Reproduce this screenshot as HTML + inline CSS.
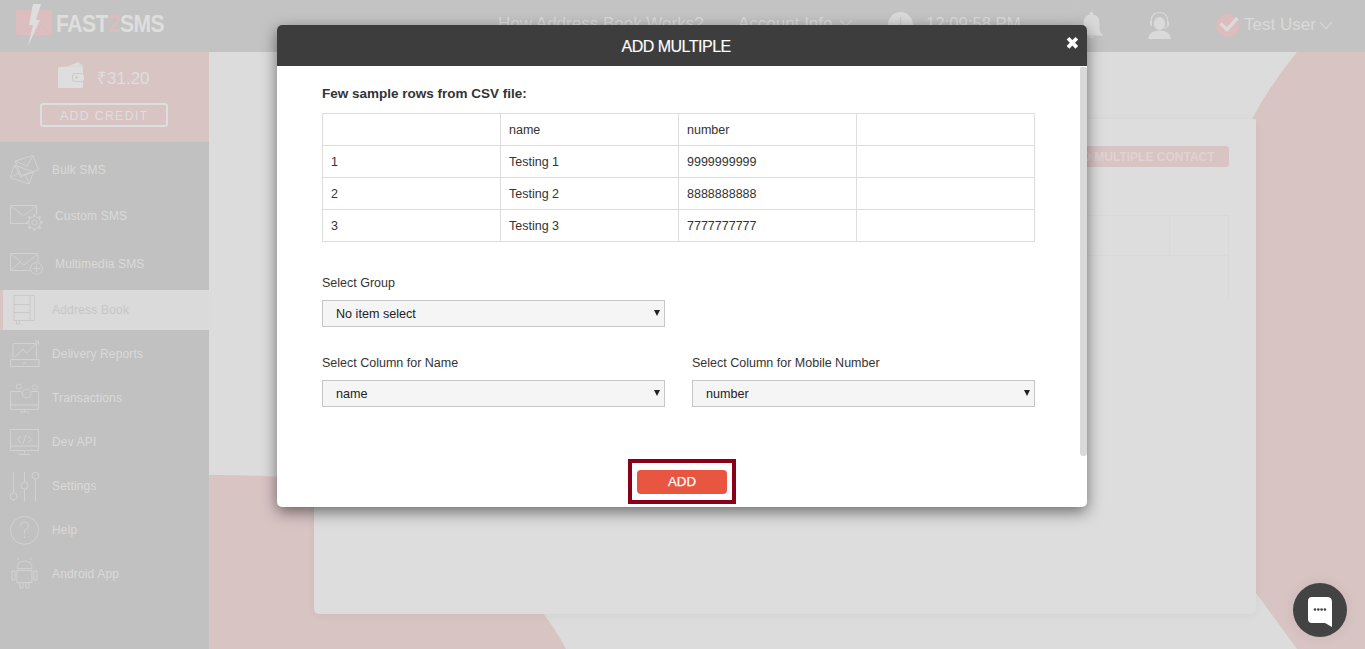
<!DOCTYPE html>
<html><head><meta charset="utf-8">
<style>
*{box-sizing:border-box;margin:0;padding:0}
html,body{width:1365px;height:649px;overflow:hidden}
body{position:relative;background:#dcdcdc;font-family:"Liberation Sans",sans-serif}
.abs{position:absolute}
#hdr{left:0;top:0;width:1365px;height:52px;background:#c3c3c3}
#side{left:0;top:52px;width:209px;height:597px;background:#c1c1c1}
#wallet{left:0;top:52px;width:209px;height:90px;background:#d9c4c4}
.mt{position:absolute;font-size:12px;color:#dadada;letter-spacing:0.15px;white-space:nowrap}
.hd{position:absolute;color:#dadada;font-size:17px;white-space:nowrap}
#card{left:314px;top:119px;width:942px;height:495px;background:#dddddd;border-radius:5px;box-shadow:0 2px 10px rgba(0,0,0,0.045)}
#modal{left:277px;top:25px;width:810px;height:482px;background:#fff;border-radius:5px;box-shadow:0 5px 15px rgba(0,0,0,0.5);overflow:hidden}
#mh{left:0;top:0;width:810px;height:41px;background:#3d3d3d}
.lbl{position:absolute;font-size:12.5px;color:#333;white-space:nowrap}
.sel{position:absolute;height:27px;background:#f5f5f5;border:1px solid #c6c6c6}
.sel span{position:absolute;left:13px;top:6px;font-size:12.6px;color:#222;white-space:nowrap}
.sel i{position:absolute;right:4.5px;top:9px;width:0;height:0;border-left:3.3px solid transparent;border-right:3.3px solid transparent;border-top:6px solid #222}
table{position:absolute;left:45px;top:88px;border-collapse:collapse}
td{border:1px solid #dddddd;width:178px;height:32px;font-size:12.5px;color:#333;padding:0 0 0 8px;vertical-align:middle}
svg{position:absolute;overflow:visible}
</style></head><body>
<!-- background pink shapes -->
<svg style="left:0;top:0" width="1365" height="649">
  <path d="M209 475 Q300 474 380 490 Q520 560 566 649 L209 649 Z" fill="#d9c4c4"/>
  <path d="M1297 52 L1365 52 L1365 649 L1297 649 L1256 593 L1256 119 L1252 119 Q1270 85 1297 52 Z" fill="#d9c4c4"/>
</svg>
<div id="card" class="abs"></div>
<div class="abs" style="left:1000px;top:146px;width:229px;height:21px;background:#d9c4c4;border-radius:3px"></div>
<div class="abs" style="left:1065px;top:150px;font-size:12px;font-weight:bold;color:#e0d2d2;white-space:nowrap">ADD MULTIPLE CONTACT</div>
<!-- faint table in card -->
<div class="abs" style="left:900px;top:215px;width:329px;height:84px;border:1px solid #d9d9d9;border-bottom:none"></div>
<div class="abs" style="left:900px;top:255px;width:329px;height:1px;background:#d9d9d9"></div>
<div class="abs" style="left:1169px;top:215px;width:1px;height:41px;background:#d9d9d9"></div>

<div id="hdr" class="abs"></div>
<div id="side" class="abs"></div>
<div id="wallet" class="abs"></div>
<div class="abs" style="left:0;top:290px;width:209px;height:40px;background:#dadada"></div>
<div class="abs" style="left:0;top:290px;width:3px;height:40px;background:#d9c4c4"></div>

<!-- logo -->
<div class="abs" style="left:16px;top:10px;width:36px;height:25px;background:#dcbebe;border-radius:2px"></div>
<svg style="left:16px;top:10px" width="36" height="25"><path d="M1 24 L13 13 M35 24 L23 13" stroke="#d8baba" stroke-width="0.7" fill="none"/></svg>
<svg style="left:24px;top:3px" width="20" height="44"><path d="M9 1 L17 1 L12 17 L16 17 L4 43 L9 22 L5 22 Z" fill="#dedede"/></svg>
<div class="abs" style="left:56px;top:10px;line-height:28px;font-size:24.5px;font-weight:bold;color:#dedede;letter-spacing:-0.6px;white-space:nowrap;transform:scaleX(0.86);transform-origin:0 0">FAST<span style="color:#dcbcbc;font-size:26.5px;line-height:0;-webkit-text-stroke:0px">2</span>SMS</div>

<!-- wallet -->
<svg style="left:57px;top:61px" width="30" height="28">
  <path d="M9 6 L22 1 L24 5 Z" fill="#dedede"/>
  <path d="M13 6 L25 3 L26 6 Z" fill="#d8d8d8"/>
  <rect x="1" y="6" width="25" height="21" rx="1.5" fill="#dedede"/>
  <rect x="15" y="12" width="12" height="9" rx="3" fill="#d4c8c8"/>
  <rect x="16" y="13" width="11" height="7" rx="2.5" fill="#dedede"/>
  <circle cx="19.5" cy="16.5" r="0.9" fill="#c9b8b8"/>
</svg>
<div class="abs" style="left:97px;top:66px;font-size:17px;color:#dedede;white-space:nowrap">₹31.20</div>
<div class="abs" style="left:40px;top:103px;width:128px;height:24px;border:2px solid #dedede;border-radius:3px"></div>
<div class="abs" style="left:60px;top:109px;font-size:12.5px;color:#dedede;letter-spacing:1.2px;white-space:nowrap">ADD CREDIT</div>

<!-- menu icons -->
<svg style="left:0;top:0" width="209" height="649" fill="none" stroke="#d2d2d2" stroke-width="1">
  <!-- bulk sms -->
  <path d="M15 161 L33 155.5 L38.5 170 L21 175.5 Z M15 161 L27 166 L33 155.5"/>
  <path d="M14.5 165 L33.5 172 L29 184 L10 177.5 Z M14.5 165 L20.5 177 L33.5 172 M10 177.5 L19 173 M29 184 L26 176"/>
  <!-- custom sms -->
  <path d="M27 223.5 L10.5 223.5 L10.5 205.5 L36.5 205.5 L36.5 214 M10.5 205.5 L23.5 216 L36.5 205.5"/>
  <circle cx="34.5" cy="222.5" r="6"/><circle cx="34.5" cy="222.5" r="2.6"/>
  <path d="M34.5 214 L34.5 216.5 M34.5 228.5 L34.5 231 M26 222.5 L28.5 222.5 M40.5 222.5 L43 222.5 M28.5 216.5 L30.3 218.3 M38.7 226.7 L40.5 228.5 M40.5 216.5 L38.7 218.3 M30.3 226.7 L28.5 228.5" stroke-width="2"/>
  <!-- multimedia -->
  <path d="M30.5 270.5 L10.5 270.5 L10.5 253.5 L38 253.5 L38 262 M10.5 253.5 L24 265 L38 253.5 M10.5 270.5 L20 262"/>
  <circle cx="36.5" cy="268.5" r="6"/><path d="M36.5 264.5 L36.5 272.5 M32.5 268.5 L40.5 268.5"/>
  <!-- address book (active) -->
  <g stroke="#c9c9c9">
  <path d="M14 295.5 L34.5 295.5 L34.5 320.5 L14 320.5 Z M14 304.5 L30 304.5 M14 312.5 L30 312.5 M30 295.5 L30 320.5 M16.5 320.5 L16.5 324 L19.5 324 L19.5 320.5"/>
  </g>
  <!-- delivery -->
  <path d="M13 358.5 L13 343.5 L36.5 343.5 L36.5 358.5 M10.5 359.5 L39 359.5 L39 366.5 L10.5 366.5 Z M15 357 L23 349 L26.5 353 L38.5 341 M35 341 L38.5 341 L38.5 344.5 M23 363 L26 363"/>
  <!-- transactions -->
  <path d="M10.5 391.5 L21.5 391.5 M31.5 391.5 L38.5 391.5 L38.5 409.5 L10.5 409.5 L10.5 391.5 M10.5 405 L38.5 405 M20 412 L29 412 M24.5 409.5 L24.5 412"/>
  <circle cx="18.8" cy="386.5" r="2.6"/><circle cx="26.6" cy="393.4" r="4.4"/><circle cx="34.9" cy="387.5" r="2.6"/>
  <!-- dev api -->
  <path d="M10.5 429.5 L38.5 429.5 L38.5 450.5 L10.5 450.5 Z M10.5 446 L38.5 446 M24.5 450.5 L24.5 453.5 M19 454.5 L30 454.5 M21 436 L17.5 439.5 L21 443 M28 436 L31.5 439.5 L28 443 M26 435 L23 444"/>
  <!-- settings -->
  <path d="M13.5 472 L13.5 492.5 M13.5 500 L13.5 501 M24.5 472 L24.5 482 M24.5 489 L24.5 501 M35.5 479 L35.5 501"/>
  <circle cx="13.5" cy="496.3" r="3.5"/><circle cx="24.5" cy="485.5" r="3.5"/><circle cx="35.5" cy="475.6" r="3.5"/>
  <!-- help -->
  <circle cx="24.5" cy="530.3" r="14"/>
  <path d="M20.5 526 Q20.5 522 24.5 522 Q28.5 522 28.5 526 Q28.5 528.5 24.5 530.5 L24.5 533.5 M24.5 536.5 L24.5 538"/>
  <!-- android -->
  <path d="M17 568.5 Q17 561 24.5 561 Q32 561 32 568.5 Z M19 560 L17.5 558 M30 560 L31.5 558 M17 570.5 L32 570.5 L32 582.5 L17 582.5 Z M20 582.5 L20 588 L23 588 L23 582.5 M26 582.5 L26 588 L29 588 L29 582.5 M12 571 L15 571 L15 580 L12 580 Z M34 571 L37 571 L37 580 L34 580 Z"/>
</svg>

<!-- menu texts -->
<div class="mt" style="left:52px;top:162.5px">Bulk SMS</div>
<div class="mt" style="left:55px;top:209px">Custom SMS</div>
<div class="mt" style="left:55px;top:257px">Multimedia SMS</div>
<div class="mt" style="left:52px;top:303px;color:#c6c6c6;letter-spacing:0.2px">Address Book</div>
<div class="mt" style="left:52px;top:347px">Delivery Reports</div>
<div class="mt" style="left:52px;top:391px">Transactions</div>
<div class="mt" style="left:52px;top:435px">Dev API</div>
<div class="mt" style="left:52px;top:479px">Settings</div>
<div class="mt" style="left:52px;top:523px">Help</div>
<div class="mt" style="left:52px;top:567px">Android App</div>

<!-- header items -->
<div class="hd" style="left:498px;top:13.5px">How Address Book Works?</div>
<div class="hd" style="left:738px;top:13.5px">Account Info</div>
<svg style="left:839px;top:19px" width="14" height="8"><path d="M1 1 L7 7 L13 1" stroke="#d6d6d6" stroke-width="1.2" fill="none"/></svg>
<div class="abs" style="left:888px;top:12px;width:25px;height:25px;border-radius:50%;background:#dadada"></div>
<svg style="left:888px;top:12px" width="25" height="25"><path d="M12.5 5 L12.5 13 L10 16" stroke="#c8c8c8" stroke-width="1.2" fill="none"/></svg>
<div class="hd" style="left:926px;top:14px;font-size:16.7px">12:09:58 PM</div>
<!-- faint diagonal in header -->
<svg style="left:0;top:0" width="1365" height="52"><path d="M1040 52 L1080 0" stroke="#c5c5c5" stroke-width="1"/></svg>
<!-- bell -->
<svg style="left:1082px;top:11px" width="22" height="28">
  <circle cx="9.5" cy="2.5" r="1.8" fill="#dadada"/>
  <path d="M9.5 3.5 Q17.5 3.5 17.5 12 L17.5 19 Q18 22 21 23.5 L21 24.5 L-1 24.5 L-1 23.5 Q1.5 22 1.5 19 L1.5 12 Q1.5 3.5 9.5 3.5 Z" fill="#dadada"/>
  <path d="M7 25.5 Q9.5 28.5 12 25.5 Z" fill="#dadada"/>
</svg>
<!-- headset -->
<svg style="left:1147px;top:11px" width="25" height="29">
  <path d="M4 12 Q4 1.5 12.5 1.5 Q21 1.5 21 12" stroke="#dadada" stroke-width="1.1" fill="none"/>
  <ellipse cx="12.5" cy="12.5" rx="5.7" ry="6.5" fill="#dadada"/>
  <rect x="3" y="10" width="2" height="5" rx="1" fill="#dadada"/>
  <rect x="20" y="10" width="2" height="5" rx="1" fill="#dadada"/>
  <path d="M21 15 Q21 17 14 17" stroke="#dadada" stroke-width="1" fill="none"/>
  <path d="M1 28 Q2 19.5 12.5 19.5 Q23 19.5 24 28 Z" fill="#dadada"/>
</svg>
<div class="abs" style="left:1216px;top:14px;width:23px;height:23px;border-radius:50%;background:#dcbcbc"></div>
<svg style="left:1216px;top:14px" width="23" height="23"><path d="M4.5 9.5 L11 15.5 L21.5 4" stroke="#dadada" stroke-width="3.6" fill="none"/></svg>
<div class="hd" style="left:1244px;top:15px">Test User</div>
<svg style="left:1319px;top:21px" width="14" height="9"><path d="M1 1 L7 7.5 L13 1" stroke="#d6d6d6" stroke-width="1.2" fill="none"/></svg>

<!-- chat -->
<div class="abs" style="left:1293px;top:583px;width:54px;height:54px;border-radius:50%;background:#434343;box-shadow:0 0 14px rgba(0,0,0,0.07)"></div>
<svg style="left:1307px;top:596px" width="26" height="32">
  <path d="M5 1 L20 1 Q25 1 25 6 L25 31 L18 27 L5 27 Q1 27 1 23 L1 5 Q1 1 5 1 Z" fill="#fff"/>
  <circle cx="8" cy="13.5" r="1.3" fill="#434343"/><circle cx="11.3" cy="13.5" r="1.3" fill="#434343"/>
  <circle cx="14.6" cy="13.5" r="1.3" fill="#434343"/><circle cx="17.9" cy="13.5" r="1.3" fill="#434343"/>
</svg>

<!-- modal -->
<div id="modal" class="abs">
  <div id="mh" class="abs"></div>
  <div class="abs" style="left:344.5px;top:13px;font-size:16px;letter-spacing:-0.5px;color:#fff;white-space:nowrap;-webkit-text-stroke:0.15px #fff">ADD MULTIPLE</div>
  <svg style="left:789px;top:11px" width="13" height="14"><path d="M2 2.2 L10.8 11.4 M10.8 2.2 L2 11.4" stroke="#fff" stroke-width="3.8" stroke-linecap="butt"/></svg>
  <div class="abs" style="left:803px;top:42px;width:6.6px;height:389px;background:#d9d9d9;border-radius:2px 2px 3px 3px"></div>
  <div class="abs" style="left:45px;top:61px;font-size:13.5px;font-weight:bold;color:#333;white-space:nowrap">Few sample rows from CSV file:</div>
  <table>
    <tr><td></td><td>name</td><td>number</td><td></td></tr>
    <tr><td>1</td><td>Testing 1</td><td>9999999999</td><td></td></tr>
    <tr><td>2</td><td>Testing 2</td><td>8888888888</td><td></td></tr>
    <tr><td>3</td><td>Testing 3</td><td>7777777777</td><td></td></tr>
  </table>
  <div class="lbl" style="left:45px;top:251px">Select Group</div>
  <div class="sel" style="left:45px;top:275px;width:343px"><span>No item select</span><i></i></div>
  <div class="lbl" style="left:45px;top:331px">Select Column for Name</div>
  <div class="sel" style="left:45px;top:355px;width:343px"><span>name</span><i></i></div>
  <div class="lbl" style="left:415px;top:331px">Select Column for Mobile Number</div>
  <div class="sel" style="left:415px;top:355px;width:343px"><span>number</span><i></i></div>
  <div class="abs" style="left:351px;top:434px;width:108px;height:45px;border:4px solid #8a0019"></div>
  <div class="abs" style="left:360px;top:445px;width:90px;height:24px;background:#e85540;border-radius:4px"></div>
  <div class="abs" style="left:391px;top:449px;font-size:13.3px;color:#fff;white-space:nowrap;-webkit-text-stroke:0.25px #fff">ADD</div>
</div>
</body></html>
